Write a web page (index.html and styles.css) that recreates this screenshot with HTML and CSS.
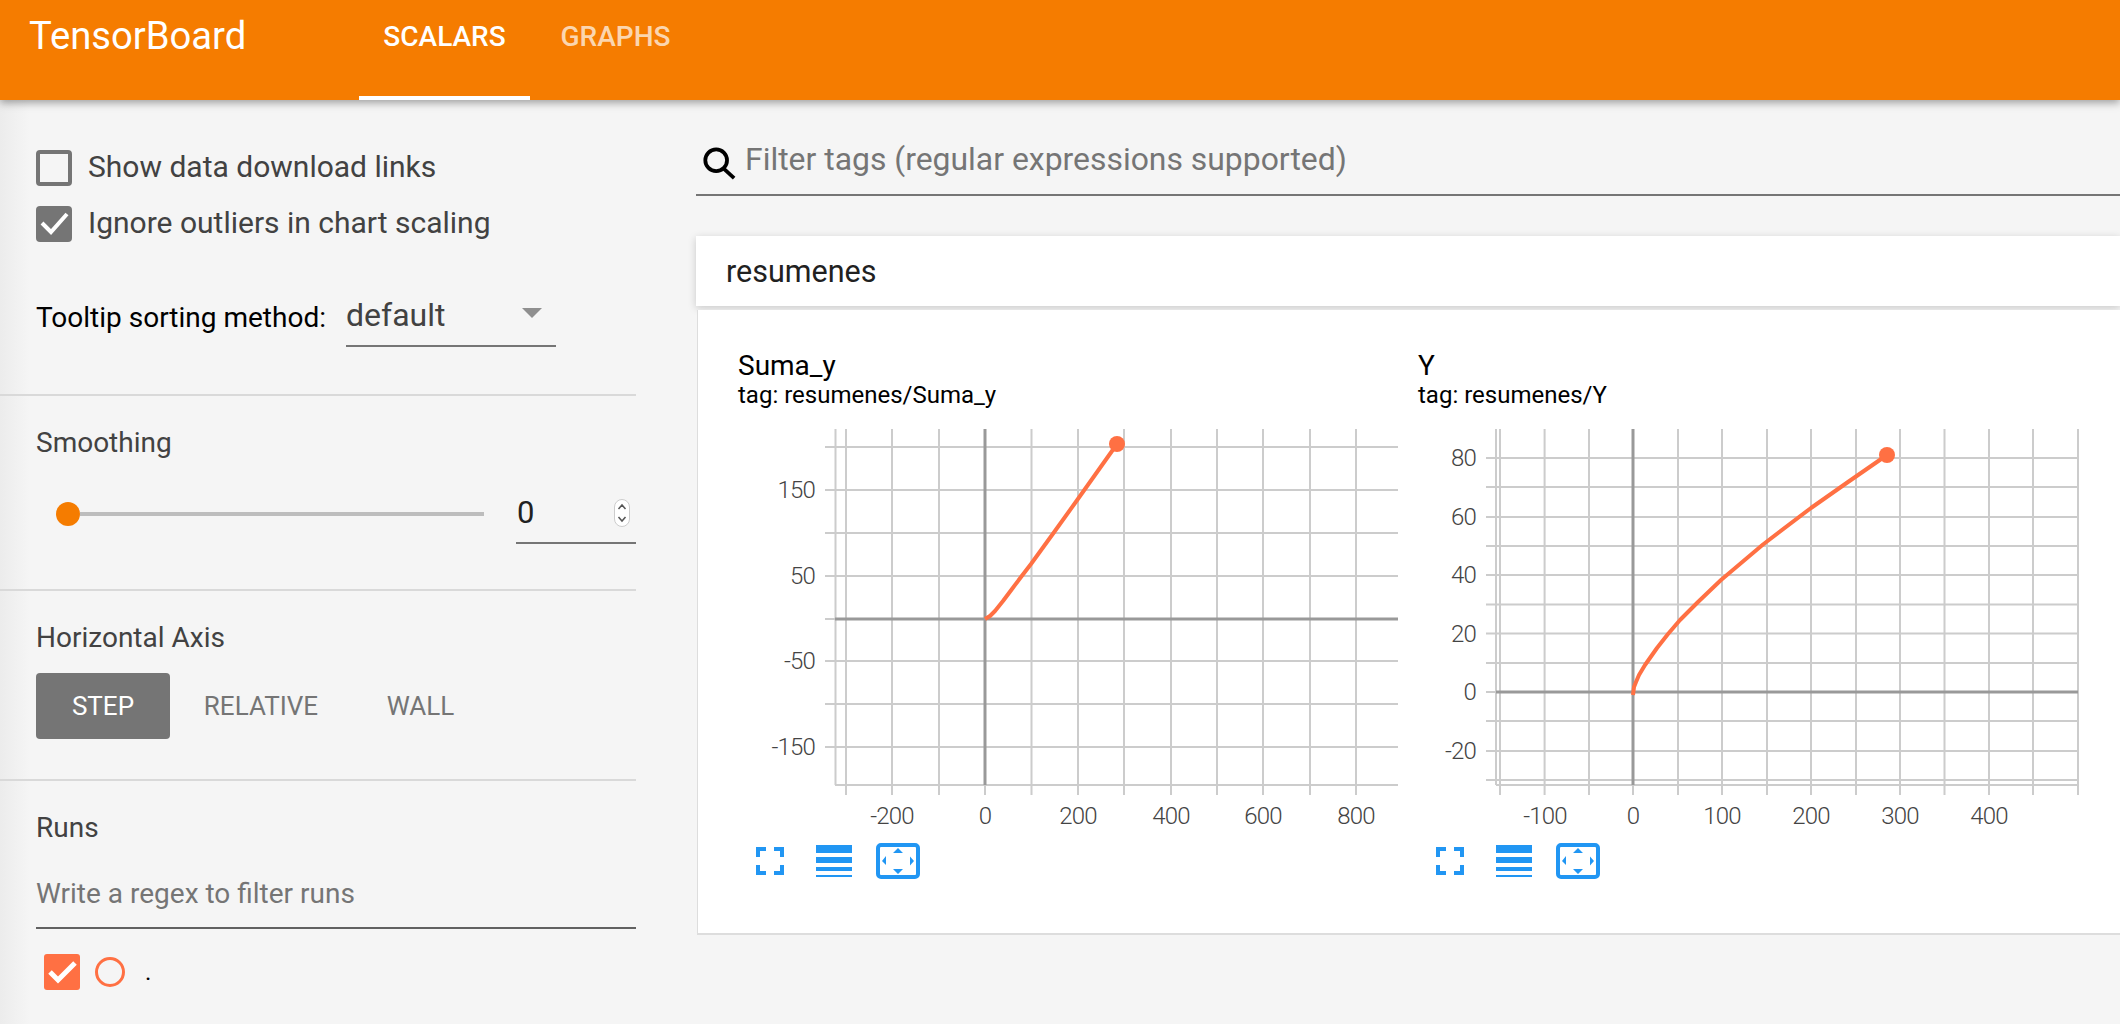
FILE: index.html
```html
<!DOCTYPE html>
<html lang="en">
<head>
<meta charset="UTF-8">
<meta name="viewport" content="width=device-width, initial-scale=1.0">
<title>TensorBoard</title>
<link rel="stylesheet" href="styles.css">
</head>
<body>

    <header class="topbar">
        <div class="brand">TensorBoard</div>
        <nav class="tabs">
            <a class="tab active" href="#">SCALARS</a>
            <a class="tab" href="#">GRAPHS</a>
        </nav>
    </header>

    <div class="page">
        <aside class="sidebar">
            <section class="side-section options">
                <label class="check-row">
                    <span class="checkbox"></span>
                    Show data download links
                </label>
                <label class="check-row">
                    <span class="checkbox checked">
                        <svg viewBox="0 0 36 36" width="36" height="36"><path d="M6 17l9 9L31 8" fill="none" stroke="#fff" stroke-width="4"/></svg>
                    </span>
                    Ignore outliers in chart scaling
                </label>
                <div class="sort-row">
                    <span class="sort-label">Tooltip sorting method:</span>
                    <div class="select">
                        <span>default</span>
                        <span class="caret"></span>
                    </div>
                </div>
            </section>

            <section class="side-section smoothing">
                <h3 class="side-title">Smoothing</h3>
                <div class="slider-row">
                    <div class="slider">
                        <span class="thumb"></span>
                        <span class="track"></span>
                    </div>
                    <div class="number-input">
                        <span>0</span>
                        <svg class="spinner" viewBox="0 0 16 28" width="16" height="28">
                            <rect x="0.5" y="0.5" width="15" height="27" rx="7.5" fill="#fff" stroke="#ccc"/>
                            <path d="M4.5 10l3.5-4 3.5 4M4.5 18l3.5 4 3.5-4" fill="none" stroke="#555" stroke-width="1.5"/>
                        </svg>
                    </div>
                </div>
            </section>

            <section class="side-section axis">
                <h3 class="side-title">Horizontal Axis</h3>
                <div class="axis-buttons">
                    <span class="axis-btn active">STEP</span>
                    <span class="axis-btn">RELATIVE</span>
                    <span class="axis-btn">WALL</span>
                </div>
            </section>

            <section class="side-section runs">
                <h3 class="side-title">Runs</h3>
                <div class="run-filter">Write a regex to filter runs</div>
                <div class="run-row">
                    <span class="run-check">
                        <svg viewBox="0 0 36 36" width="36" height="36"><path d="M6 18l8 8L31 9" fill="none" stroke="#fff" stroke-width="5"/></svg>
                    </span>
                    <span class="run-circle"></span>
                    <span class="run-name">.</span>
                </div>
            </section>
        </aside>

        <main class="content">
            <div class="tag-filter">
                <svg class="search-icon" viewBox="0 0 36 36" width="36" height="34">
                    <circle cx="15" cy="14" r="11.5" fill="none" stroke="#000" stroke-width="4"/>
                    <path d="M23 23l11 10" fill="none" stroke="#000" stroke-width="4"/>
                </svg>
                <span>Filter tags (regular expressions supported)</span>
            </div>

            <div class="group-head">resumenes</div>

            <div class="group-card">
                <div class="chart-block">
                    <div class="chart-title">Suma_y</div>
                    <div class="chart-tag">tag: resumenes/Suma_y</div>
                    <svg class="chart" viewBox="738 420 662 420" width="662" height="420">
                        <!-- grid -->
                        <path class="grid" d="M825 448H1398M825 491H1398M825 534H1398M825 577H1398M825 662H1398M825 705H1398M825 748H1398M825 620H835"/>
                        <path class="grid" d="M835.5 430V786M846 430V796M892 430V796M939 430V796M1031.5 430V796M1078 430V796M1124 430V796M1171 430V796M1217 430V796M1263 430V796M1310 430V796M1356 430V796M985 786V796M835 786H1398"/>
                        <path class="zero" d="M835 620H1398M985 430V786"/>
                        <polyline class="curve" points="985,620 990,617 995,612 1003,602 1012,590 1021,578 1031,565 1053.5,534 1076.5,502 1117,445"/>
                        <circle class="dot" cx="1117" cy="445" r="8"/>
                        <!-- labels -->
                        <text class="y-label" x="815" y="499">150</text>
                        <text class="y-label" x="815" y="585">50</text>
                        <text class="y-label" x="815" y="670">-50</text>
                        <text class="y-label" x="815" y="756">-150</text>
                        <text class="x-label" x="892" y="825">-200</text>
                        <text class="x-label" x="985" y="825">0</text>
                        <text class="x-label" x="1078" y="825">200</text>
                        <text class="x-label" x="1171" y="825">400</text>
                        <text class="x-label" x="1263" y="825">600</text>
                        <text class="x-label" x="1356" y="825">800</text>
                    </svg>
                    <div class="chart-tools">
                        <svg class="tool" viewBox="0 0 28 28" width="28" height="28"><path d="M0 0h10v4H4v6H0zM18 0h10v10h-4V4h-6zM0 18h4v6h6v4H0zM24 18h4v10H18v-4h6z" fill="#2196f3"/></svg>
                        <svg class="tool tool-lines" viewBox="0 0 36 32" width="36" height="32"><path d="M0 0h36v8H0zM0 12h36v6H0zM0 22h36v4H0zM0 30h36v2H0z" fill="#2196f3"/></svg>
                        <svg class="tool tool-fit" viewBox="0 0 44 36" width="44" height="36"><rect x="2" y="2" width="40" height="32" rx="3" fill="none" stroke="#2196f3" stroke-width="4"/><path d="M22 5l5 5H17zM22 31l-5-5h10zM6 18l4-5v9zM38 18l-4 4.500v-9z" fill="#2196f3"/></svg>
                    </div>
                </div>

                <div class="chart-block">
                    <div class="chart-title">Y</div>
                    <div class="chart-tag">tag: resumenes/Y</div>
                    <svg class="chart" viewBox="1418 420 682 420" width="682" height="420">
                        <path class="grid" d="M1486 459H2078M1486 488H2078M1486 518H2078M1486 547H2078M1486 576H2078M1486 605.5H2078M1486 634.6H2078M1486 664H2078M1486 693H1496M1486 722H2078M1486 752H2078M1486 781H2078"/>
                        <path class="grid" d="M1496 430V786M1500 430V796M1544.6 430V796M1589 430V796M1678 430V796M1722 430V796M1767 430V796M1811 430V796M1856 430V796M1900 430V796M1944.5 430V796M1989 430V796M2033 430V796M2078 430V796M1633 786V796M1496 786H2078"/>
                        <path class="zero" d="M1496 693H2078M1633 430V786"/>
                        <polyline class="curve" points="1633,696 1634,688 1636,683 1639,676 1645,666 1657,649 1668,635 1680,621 1698,603 1721,581 1763,545.500 1811,509 1848,483 1887,456"/>
                        <circle class="dot" cx="1887" cy="456" r="8"/>
                        <text class="y-label" x="1476" y="467">80</text>
                        <text class="y-label" x="1476" y="526">60</text>
                        <text class="y-label" x="1476" y="584">40</text>
                        <text class="y-label" x="1476" y="643">20</text>
                        <text class="y-label" x="1476" y="701">0</text>
                        <text class="y-label" x="1476" y="760">-20</text>
                        <text class="x-label" x="1545" y="825">-100</text>
                        <text class="x-label" x="1633" y="825">0</text>
                        <text class="x-label" x="1722" y="825">100</text>
                        <text class="x-label" x="1811" y="825">200</text>
                        <text class="x-label" x="1900" y="825">300</text>
                        <text class="x-label" x="1989" y="825">400</text>
                    </svg>
                    <div class="chart-tools">
                        <svg class="tool" viewBox="0 0 28 28" width="28" height="28"><path d="M0 0h10v4H4v6H0zM18 0h10v10h-4V4h-6zM0 18h4v6h6v4H0zM24 18h4v10H18v-4h6z" fill="#2196f3"/></svg>
                        <svg class="tool tool-lines" viewBox="0 0 36 32" width="36" height="32"><path d="M0 0h36v8H0zM0 12h36v6H0zM0 22h36v4H0zM0 30h36v2H0z" fill="#2196f3"/></svg>
                        <svg class="tool tool-fit" viewBox="0 0 44 36" width="44" height="36"><rect x="2" y="2" width="40" height="32" rx="3" fill="none" stroke="#2196f3" stroke-width="4"/><path d="M22 5l5 5H17zM22 31l-5-5h10zM6 18l4-5v9zM38 18l-4 4.500v-9z" fill="#2196f3"/></svg>
                    </div>
                </div>
            </div>
        </main>
    </div>

</body>
</html>
```

FILE: styles.css
```css
* {
    box-sizing: border-box;
}
html, body {
    height: 100%;
}
body {
    margin: 0;
    background: #f5f5f5;
    font-family: Roboto, "Liberation Sans", sans-serif;
    overflow: hidden;
}
a {
    color: inherit;
    text-decoration: none;
}
h3 {
    margin: 0;
    font-weight: 400;
}

/* top bar */
.topbar {
    position: relative;
    z-index: 2;
    display: flex;
    height: 100px;
    padding-left: 29px;
    background: #f57c00;
    color: #fff;
    box-shadow: 0 3px 8px rgba(0,0,0,.35);
}
.brand {
    width: 330px;
    padding-top: 14px;
    font-size: 38.2px;
    line-height: 44px;
}
.tabs {
    display: flex;
}
.tab {
    width: 171px;
    height: 100px;
    padding-top: 21px;
    text-align: center;
    font-size: 28px;
    line-height: 32px;
    font-weight: 500;
    color: rgba(255,255,255,.7);
}
.tab.active {
    color: #fff;
    border-bottom: 4px solid #fff;
}

/* layout */
.page {
    display: flex;
    height: 924px;
}
.sidebar {
    flex: none;
    width: 636px;
    margin-right: 60px;
    color: #424242;
    background: linear-gradient(to right, #ececec, #f5f5f5 30px);
}
.content {
    flex: 1;
    min-width: 0;
}

/* sidebar */
.side-section {
    padding-left: 36px;
    border-bottom: 2px solid #d9d9d9;
}
.side-section:last-child {
    border-bottom: 0;
}
.options {
    height: 296px;
    padding-top: 50px;
}
.check-row {
    display: flex;
    align-items: flex-start;
    gap: 16px;
    height: 36px;
    margin-bottom: 20px;
    font-size: 30px;
    line-height: 34px;
}
.checkbox {
    flex: none;
    width: 36px;
    height: 36px;
    border: 4px solid #757575;
    border-radius: 4px;
}
.checkbox.checked {
    border: 0;
    background: #757575;
}
.checkbox svg, .run-check svg {
    display: block;
}
.sort-row {
    display: flex;
    align-items: flex-start;
    margin-top: 46px;
}
.sort-label {
    width: 310px;
    padding-top: 12px;
    font-size: 28px;
    line-height: 36px;
    color: #000;
}
.select {
    display: flex;
    justify-content: space-between;
    width: 210px;
    height: 59px;
    padding-top: 6px;
    border-bottom: 2px solid #757575;
    font-size: 32px;
    line-height: 42px;
}
.caret {
    width: 0;
    height: 0;
    margin: 14px 14px 0 0;
    border-left: 10px solid transparent;
    border-right: 10px solid transparent;
    border-top: 10px solid #8f8f8f;
}
.side-title {
    font-size: 28px;
    line-height: 36px;
}
.smoothing {
    height: 195px;
    padding-top: 29px;
}
.slider-row {
    display: flex;
    margin-top: 40px;
}
.slider {
    display: flex;
    align-items: center;
    width: 480px;
    height: 24px;
    padding-left: 20px;
    margin-top: 1px;
}
.thumb {
    flex: none;
    width: 24px;
    height: 24px;
    border-radius: 50%;
    background: #f57c00;
}
.track {
    width: 404px;
    height: 4px;
    background: #bdbdbd;
}
.number-input {
    display: flex;
    justify-content: space-between;
    width: 120px;
    height: 59px;
    padding: 9px 6px 0 1px;
    border-bottom: 2px solid #757575;
    font-size: 31px;
    line-height: 38px;
    color: #212121;
    margin-top: -16px;
}
.spinner {
    margin-top: 5px;
}
.axis {
    height: 190px;
    padding-top: 29px;
}
.axis-buttons {
    display: flex;
    margin-top: 17px;
}
.axis-btn {
    width: 134px;
    height: 66px;
    border-radius: 4px;
    text-align: center;
    font-size: 26px;
    line-height: 66px;
    color: #757575;
}
.axis-btn.active {
    background: #757575;
    color: #fff;
}
.axis-btn:nth-child(2) {
    width: 182px;
}
.axis-btn:nth-child(3) {
    width: 137px;
}
.runs {
    padding-top: 29px;
}
.run-filter {
    width: 600px;
    height: 67px;
    margin-top: 16px;
    padding-top: 14px;
    border-bottom: 2px solid #616161;
    font-size: 28px;
    line-height: 36px;
    color: #757575;
}
.run-row {
    display: flex;
    align-items: center;
    height: 36px;
    margin-top: 25px;
    padding-left: 8px;
}
.run-check {
    flex: none;
    width: 36px;
    height: 36px;
    border-radius: 3px;
    background: #ff7043;
}
.run-circle {
    width: 30px;
    height: 30px;
    margin-left: 15px;
    border: 3px solid #ff7043;
    border-radius: 50%;
}
.run-name {
    margin-left: 20px;
    font-size: 24px;
    color: #000;
}

/* main column */
.tag-filter {
    display: flex;
    align-items: flex-start;
    height: 96px;
    padding: 40px 0 0 5px;
    border-bottom: 2px solid #757575;
    font-size: 31.9px;
    line-height: 38px;
    color: #757575;
}
.search-icon {
    flex: none;
    margin: 7px 8px 0 0;
}
.group-head {
    height: 70px;
    margin-top: 40px;
    padding-left: 30px;
    background: #fff;
    font-size: 30.5px;
    line-height: 72px;
    color: #212121;
    box-shadow: 0 2px 8px rgba(0,0,0,.18);
}
.group-card {
    display: flex;
    height: 625px;
    margin: 4px 0 0 1px;
    padding: 40px 0 0 40px;
    background: #fff;
    border-left: 1px solid #ddd;
    border-bottom: 2px solid #ddd;
}

/* charts */
.chart-block {
    flex: none;
    width: 680px;
}
.chart-title {
    font-size: 28px;
    line-height: 32px;
    color: #000;
}
.chart-tag {
    font-size: 24px;
    line-height: 26px;
    color: #000;
}
.chart {
    display: block;
    margin-top: 11px;
}
.grid {
    fill: none;
    stroke: #ccc;
    stroke-width: 2;
}
.zero {
    fill: none;
    stroke: #999;
    stroke-width: 3;
}
.curve {
    fill: none;
    stroke: #ff7043;
    stroke-width: 4;
    stroke-linejoin: round;
}
.dot {
    fill: #ff7043;
}
.y-label, .x-label {
    font-size: 24px;
    font-weight: 300;
    letter-spacing: -.8px;
    fill: #444;
}
.y-label {
    text-anchor: end;
}
.x-label {
    text-anchor: middle;
}
.chart-tools {
    display: flex;
    align-items: flex-start;
    height: 40px;
    margin-top: 4px;
    padding-left: 18px;
}
.tool {
    display: block;
    margin-top: 4px;
}
.tool-lines {
    margin: 2px 24px 0 32px;
}
.tool-fit {
    margin-top: 0;
}
```
